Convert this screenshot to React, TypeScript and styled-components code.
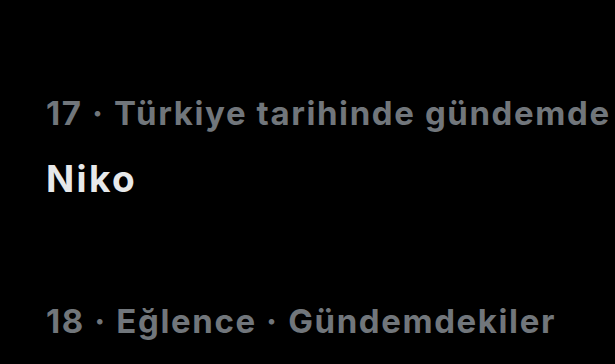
import React, { FunctionComponent } from 'react';
import styled, { createGlobalStyle } from 'styled-components';

const GlobalStyle = createGlobalStyle`
  html, body {
    margin: 0;
    padding: 0;
    background: #000000;
  }
  body {
    font-family: Inter, "Noto Sans", sans-serif;
  }
`;

const Page = styled.div`
  width: 615px;
  height: 364px;
  overflow: hidden;
  background: #000000;
  display: flex;
  flex-direction: column;
  gap: 94px;
  padding: 93px 0 0 46px;
  box-sizing: border-box;
`;

const TrendItem = styled.div`
  display: flex;
  flex-direction: column;
  gap: 18px;
`;

const Meta = styled.div`
  font-size: 33px;
  line-height: 40px;
  font-weight: 700;
  letter-spacing: 1.6px;
  color: #71767b;
  white-space: nowrap;
`;

const TrendName = styled.div`
  font-size: 37px;
  line-height: 56px;
  font-weight: 700;
  letter-spacing: 2.4px;
  color: #e7e9ea;
  white-space: nowrap;
`;

interface Trend {
  meta: string[];
  name: string;
}

const trends: Trend[] = [
  { meta: ['17', 'Türkiye tarihinde gündemde'], name: 'Niko' },
  { meta: ['18', 'Eğlence', 'Gündemdekiler'], name: '' },
];

const App: FunctionComponent = () => {
  return (
    <>
      <GlobalStyle />
      <Page>
        {trends.map(trend => (
          <TrendItem key={trend.meta[0]}>
            <Meta>{trend.meta.join(' · ')}</Meta>
            {trend.name && <TrendName>{trend.name}</TrendName>}
          </TrendItem>
        ))}
      </Page>
    </>
  );
};

export default App;
